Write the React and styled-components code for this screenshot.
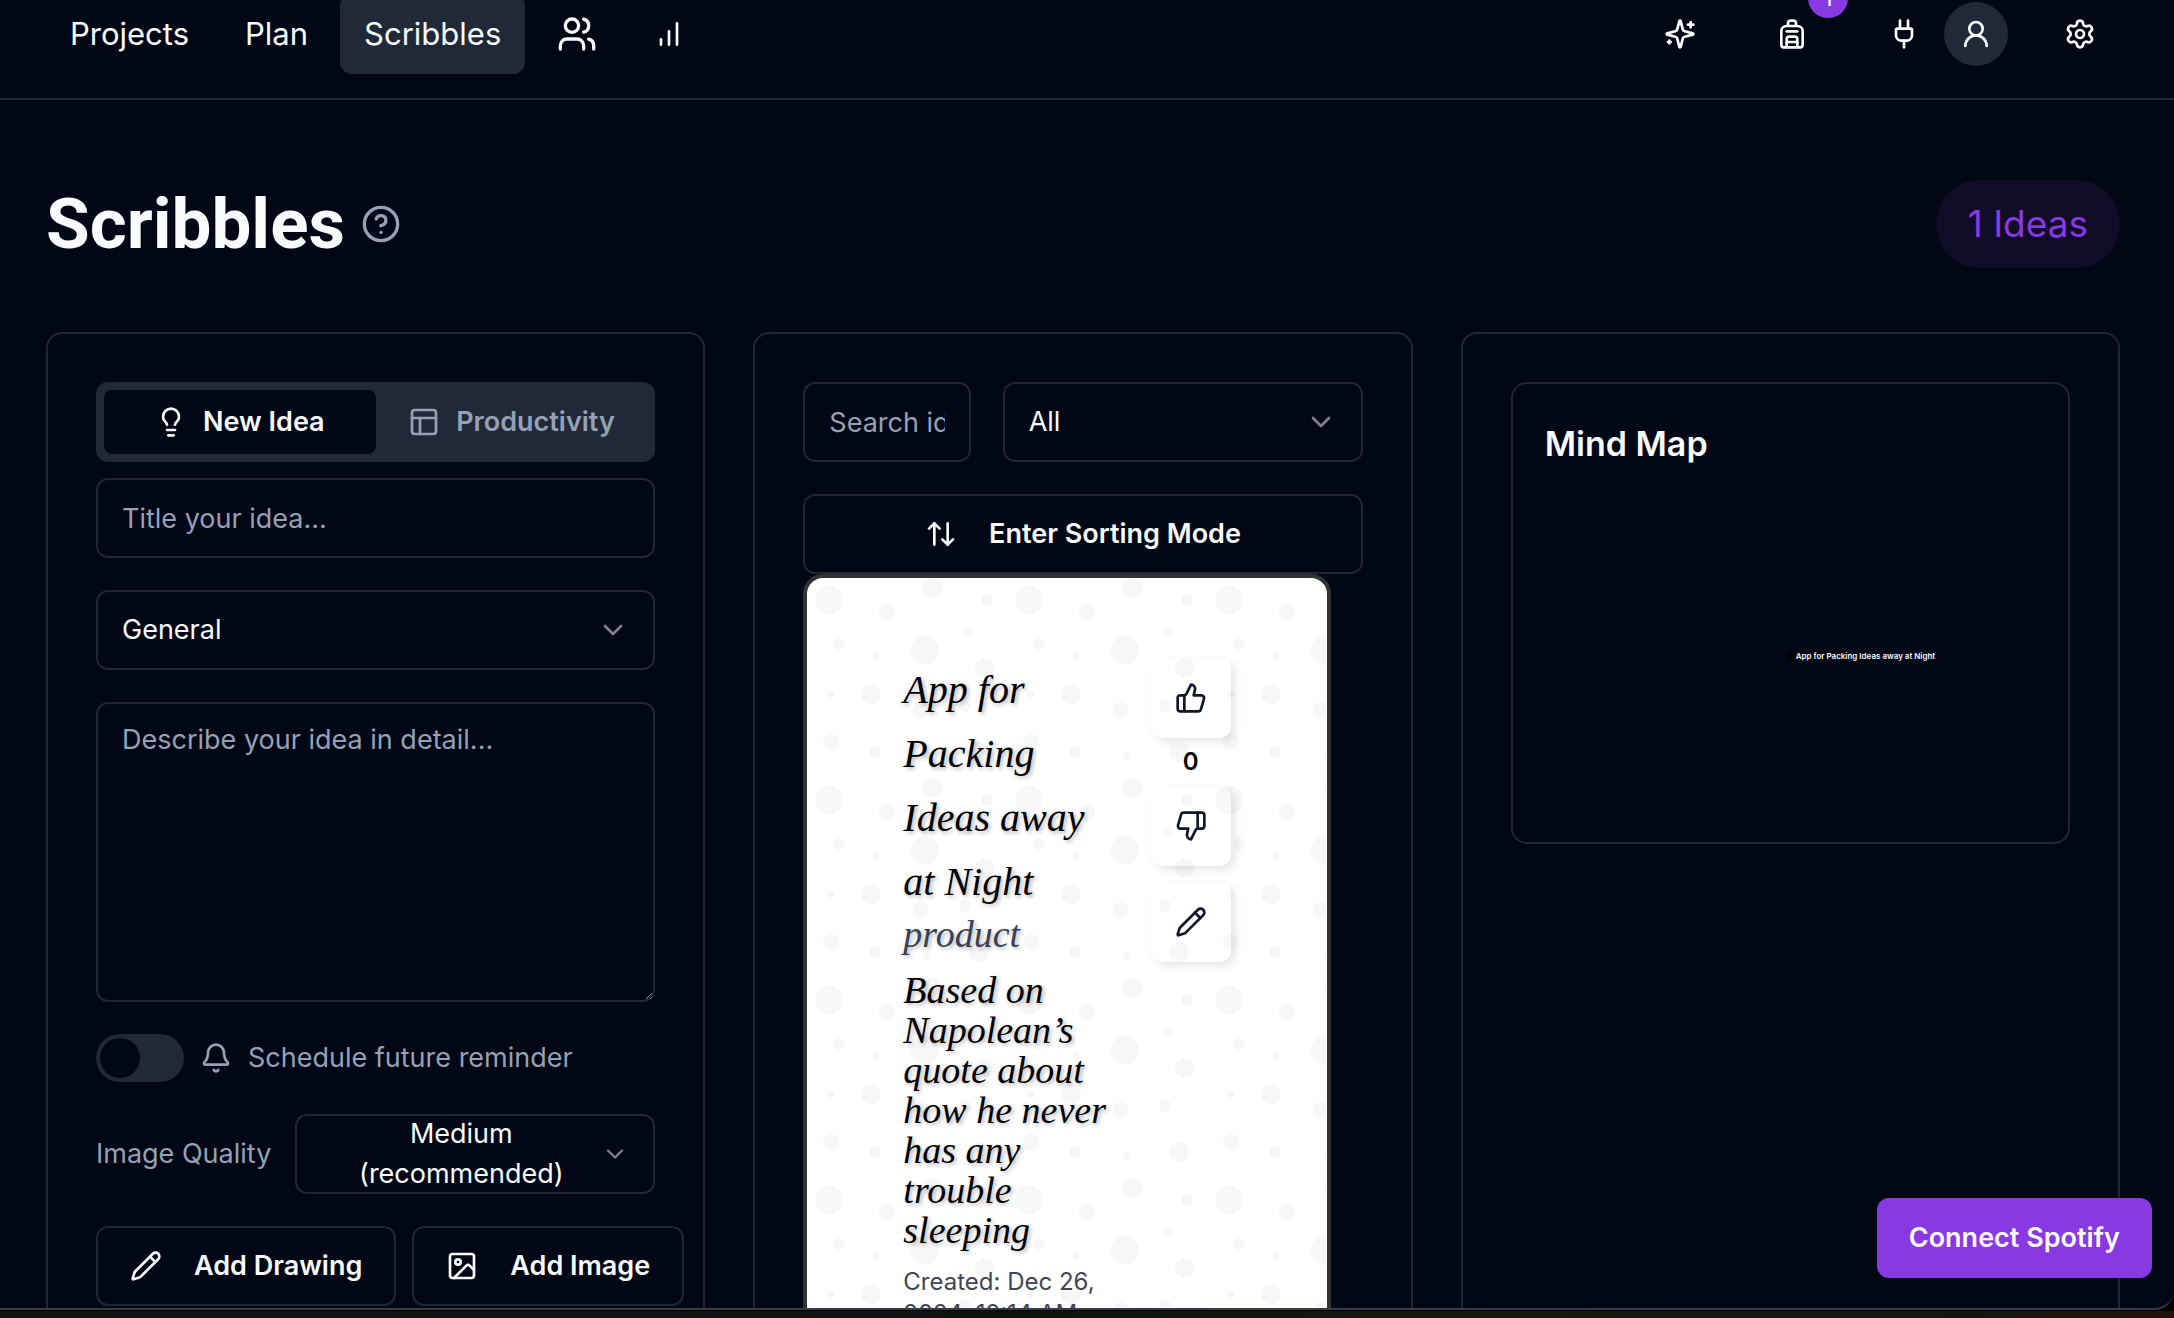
import styled, { createGlobalStyle, css } from 'styled-components';
import {
    ArrowUpDown, Backpack, Bell, ChevronDown, CircleHelp, Image, Lightbulb,
    PanelsTopLeft, Pencil, Plug, Settings, ThumbsDown, ThumbsUp, UserRound, Users,
} from 'lucide-react';

// [cx, cy, r] of every bubble in one 100 x 100 tile
const bubbles = [
    [11, 11, 7], [59, 36, 7], [16, 33, 3], [79, 64, 3], [34, 87, 3], [90, 11, 3],
    [12, 82, 4], [40, 17, 4], [63, 5, 5], [57, 66, 4], [86, 87, 5], [32, 58, 5],
    [89, 45, 5], [80, 27, 2], [60, 89, 2], [35, 39, 2], [12, 58, 2],
];

const BarsIcon = () => (
    <svg width="32" height="32" viewBox="0 0 24 24" fill="none" stroke="currentColor" strokeWidth="2" strokeLinecap="round" aria-hidden="true">
        <path d="M12 20V10" />
        <path d="M18 20V4" />
        <path d="M6 20v-4" />
    </svg>
)

const SparklesIcon = () => (
    <svg width="32" height="32" viewBox="0 0 24 24" fill="none" stroke="currentColor" strokeWidth="2" strokeLinecap="round" strokeLinejoin="round" aria-hidden="true">
        <path d="M9.937 15.5A2 2 0 0 0 8.5 14.063l-6.135-1.582a.5.5 0 0 1 0-.962L8.5 9.936A2 2 0 0 0 9.937 8.5l1.582-6.135a.5.5 0 0 1 .963 0L14.063 8.5A2 2 0 0 0 15.5 9.937l6.135 1.581a.5.5 0 0 1 0 .964L15.5 14.063a2 2 0 0 0-1.437 1.437l-1.582 6.135a.5.5 0 0 1-.963 0z" />
        <path d="M20 3v4" />
        <path d="M22 5h-4" />
        <path d="M4 17v2" />
        <path d="M5 18H3" />
    </svg>
)

const Bubbles = () => (
    <BubbleLayer aria-hidden="true">
        <defs>
            <pattern id="bubbles" width="200" height="200" patternUnits="userSpaceOnUse">
                {bubbles.map(([x, y, r]) => (
                    <circle key={`${x}-${y}`} cx={x * 2} cy={y * 2} r={r * 2} fill="#f7f7f7" />
                ))}
            </pattern>
        </defs>
        <rect width="100%" height="100%" fill="url(#bubbles)" />
    </BubbleLayer>
)

const TopNav = () => (
    <Header>
        <Nav>
            <NavLink href="#projects">Projects</NavLink>
            <NavLink href="#plan">Plan</NavLink>
            <NavLink href="#scribbles" $active>Scribbles</NavLink>
            <NavLink href="#team" aria-label="Team"><Users size={40} /></NavLink>
            <NavLink href="#stats" aria-label="Stats"><BarsIcon /></NavLink>
        </Nav>
        <Actions>
            <IconButton aria-label="Assistant"><SparklesIcon /></IconButton>
            <IconButton aria-label="Backpack">
                <Backpack size={32} />
                <Badge>1</Badge>
            </IconButton>
            <Account>
                <IconButton aria-label="Integrations"><Plug size={32} /></IconButton>
                <Avatar aria-label="Profile"><UserRound size={32} /></Avatar>
            </Account>
            <IconButton aria-label="Settings"><Settings size={32} /></IconButton>
        </Actions>
    </Header>
)

const IdeaForm = () => (
    <Card>
        <TabList role="tablist">
            <Tab role="tab" aria-selected="true" $active><Lightbulb size={32} />New Idea</Tab>
            <Tab role="tab" aria-selected="false"><PanelsTopLeft size={32} />Productivity</Tab>
        </TabList>
        <Form>
            <Input aria-label="Title" placeholder="Title your idea..." />
            <SelectBox>
                <Select aria-label="Category" defaultValue="General">
                    <option>General</option>
                </Select>
                <ChevronDown size={32} />
            </SelectBox>
            <TextArea aria-label="Description" placeholder="Describe your idea in detail..." />
            <Row $gap={16}>
                <Switch type="checkbox" id="reminder" />
                <ReminderLabel htmlFor="reminder"><Bell size={32} />Schedule future reminder</ReminderLabel>
            </Row>
            <Row $gap={24}>
                <Label htmlFor="quality">Image Quality</Label>
                <QualityBox>
                    <QualityValue aria-hidden="true">Medium (recommended)</QualityValue>
                    <ChevronDown size={28} />
                    <QualitySelect id="quality" defaultValue="medium">
                        <option value="medium">Medium</option>
                    </QualitySelect>
                </QualityBox>
            </Row>
            <Row $gap={16}>
                <OutlineButton type="button"><Pencil size={32} />Add Drawing</OutlineButton>
                <OutlineButton type="button"><Image size={32} />Add Image</OutlineButton>
            </Row>
        </Form>
    </Card>
)

const IdeaList = () => (
    <Card>
        <Filters>
            <Input aria-label="Search ideas" placeholder="Search ideas..." />
            <SelectBox $width="360px">
                <Select aria-label="Filter" defaultValue="All">
                    <option>All</option>
                </Select>
                <ChevronDown size={32} />
            </SelectBox>
        </Filters>
        <OutlineButton type="button" $wide><ArrowUpDown size={32} />Enter Sorting Mode</OutlineButton>
        <Note>
            <Bubbles />
            <NoteText>
                <NoteTitle>App for Packing Ideas away at Night</NoteTitle>
                <NoteTag>product</NoteTag>
                <NoteBody>Based on Napolean’s quote about how he never has any trouble sleeping</NoteBody>
                <NoteDate>Created: Dec 26, 2024, 12:14 AM</NoteDate>
            </NoteText>
            <NoteActions>
                <NoteButton aria-label="Like"><ThumbsUp size={32} /></NoteButton>
                <Votes>0</Votes>
                <NoteButton aria-label="Dislike"><ThumbsDown size={32} /></NoteButton>
                <NoteButton aria-label="Edit" $spaced><Pencil size={32} /></NoteButton>
            </NoteActions>
        </Note>
    </Card>
)

const MindMap = () => (
    <Card>
        <MapPanel>
            <MapTitle>Mind Map</MapTitle>
            <MapCanvas>
                <circle cx="50%" cy="50%" r="4" fill="#000000" />
                <text x="50%" y="50%" dx="5" dy="2">App for Packing Ideas away at Night</text>
            </MapCanvas>
        </MapPanel>
    </Card>
)

const App = () => {
    return (
    <>
    <GlobalStyle />
    <Screen>
        <Window>
            <TopNav />
            <Main>
                <TitleBar>
                    <Title>Scribbles <CircleHelp size={40} /></Title>
                    <Count>1 Ideas</Count>
                </TitleBar>
                <Columns>
                    <IdeaForm />
                    <IdeaList />
                    <MindMap />
                </Columns>
            </Main>
            <SpotifyButton>Connect Spotify</SpotifyButton>
        </Window>
        <Desktop />
    </Screen>
    </>
    )
}

export default App

const GlobalStyle = createGlobalStyle`
    * {
        box-sizing : border-box ;
    }
    body {
        margin : 0 ;
        background : #000000 ;
        color : #f8fafc ;
        font-family : Inter, sans-serif ;
        font-size : 27px ;
        line-height : 40px ;
    }
    button, input, textarea, select {
        font : inherit ;
        color : inherit ;
    }
    svg {
        flex-shrink : 0 ;
    }
`
const Screen = styled.div`
    height : 100vh ;
    display : flex ;
    flex-direction : column ;
`
const Window = styled.div`
    position : relative ;
    flex : 1 ;
    min-height : 0 ;
    overflow : hidden ;
    background : #010715 ;
    border-bottom : 2px solid #363b47 ;
    border-bottom-right-radius : 20px ;
`
const Desktop = styled.div`
    height : 8px ;
    border-top : 1px solid #000000 ;
    background : linear-gradient(90deg, #111111 43%, #0b120a 44%, #17170f 70%, #12140f 90%, #22120b) ;
`

// header
const Header = styled.header`
    display : flex ;
    justify-content : space-between ;
    align-items : center ;
    margin-top : -6px ;
    padding : 0 54px 24px 46px ;
    border-bottom : 2px solid #1f2736 ;
`
const Nav = styled.nav`
    display : flex ;
    gap : 8px ;
`
const NavLink = styled.a`
    display : flex ;
    align-items : center ;
    height : 80px ;
    padding : 0 24px ;
    border-radius : 12px ;
    background : ${({ $active }) => ($active ? '#202938' : 'transparent')} ;
    color : #f8fafc ;
    font-size : 31px ;
    text-decoration : none ;
`
const Actions = styled.div`
    display : flex ;
    align-items : center ;
    gap : 32px ;
`
const Account = styled.div`
    display : flex ;
    align-items : center ;
`
const IconButton = styled.button`
    position : relative ;
    display : flex ;
    justify-content : center ;
    align-items : center ;
    width : 80px ;
    height : 80px ;
    padding : 0 ;
    border : none ;
    border-radius : 12px ;
    background : transparent ;
    cursor : pointer ;
`
const Avatar = styled(IconButton)`
    width : 64px ;
    height : 64px ;
    border-radius : 50% ;
    background : #202938 ;
`
const Badge = styled.span`
    position : absolute ;
    top : -16px ;
    right : -16px ;
    width : 40px ;
    height : 40px ;
    border-radius : 50% ;
    background : #8839e1 ;
    font-size : 24px ;
`

// page title
const Main = styled.main`
    padding : 80px 54px 0 46px ;
`
const TitleBar = styled.div`
    display : flex ;
    justify-content : space-between ;
    align-items : center ;
    margin-bottom : 64px ;
`
const Title = styled.h1`
    display : flex ;
    align-items : center ;
    gap : 16px ;
    margin : 0 ;
    font-family : Roboto, sans-serif ;
    font-size : 71px ;
    font-weight : 700 ;
    line-height : 80px ;

    svg {
        color : #96a1b5 ;
    }
`
const Count = styled.span`
    padding : 16px 32px ;
    border-radius : 44px ;
    background : #110c28 ;
    color : #8839e1 ;
    font-size : 37px ;
    line-height : 56px ;
`

// columns
const Columns = styled.div`
    display : grid ;
    grid-template-columns : repeat(3, minmax(0, 1fr)) ;
    gap : 48px ;
`
const Card = styled.section`
    padding : 48px ;
    border : 2px solid #1f2736 ;
    border-radius : 16px ;
`
const TabList = styled.div`
    display : grid ;
    grid-template-columns : 1fr 1fr ;
    height : 80px ;
    margin-bottom : 16px ;
    padding : 8px ;
    border-radius : 12px ;
    background : #202938 ;
`
const Tab = styled.button`
    display : flex ;
    justify-content : center ;
    align-items : center ;
    gap : 16px ;
    padding : 0 ;
    border : none ;
    border-radius : 8px ;
    background : ${({ $active }) => ($active ? '#010715' : 'transparent')} ;
    color : ${({ $active }) => ($active ? '#f8fafc' : '#96a1b5')} ;
    font-weight : 600 ;
`
const Form = styled.form`
    display : flex ;
    flex-direction : column ;
    gap : 32px ;
`
const field = css`
    width : 100% ;
    min-width : 0 ;
    height : 80px ;
    padding : 0 24px ;
    border : 2px solid #1f2736 ;
    border-radius : 12px ;
    background : #010715 ;
    outline : none ;

    &::placeholder {
        color : #96a1b5 ;
        opacity : 1 ;
    }
`
const Input = styled.input`
    ${field}
`
const TextArea = styled.textarea`
    ${field}
    display : block ;
    height : 300px ;
    padding : 16px 24px ;
    resize : vertical ;
`
const SelectBox = styled.div`
    position : relative ;
    flex : none ;
    width : ${({ $width }) => $width || '100%'} ;

    svg {
        position : absolute ;
        top : 24px ;
        right : 26px ;
        opacity : 0.5 ;
        pointer-events : none ;
    }
`
const Select = styled.select`
    ${field}
    appearance : none ;
`
const Row = styled.div`
    display : flex ;
    align-items : center ;
    gap : ${({ $gap }) => $gap}px ;
`
const Switch = styled.input`
    appearance : none ;
    display : flex ;
    width : 88px ;
    height : 48px ;
    margin : 0 ;
    padding : 4px ;
    border-radius : 24px ;
    background : #202938 ;

    &::before {
        content : '' ;
        width : 40px ;
        height : 40px ;
        border-radius : 50% ;
        background : #010715 ;
    }
`
const Label = styled.label`
    flex : none ;
    color : #96a1b5 ;
`
const ReminderLabel = styled(Label)`
    display : flex ;
    align-items : center ;
    gap : 16px ;
`
const QualityBox = styled.div`
    ${field}
    position : relative ;
    flex : 1 ;
    display : flex ;
    align-items : center ;

    svg {
        opacity : 0.5 ;
    }
`
const QualityValue = styled.span`
    flex : 1 ;
    text-align : center ;
`
const QualitySelect = styled.select`
    position : absolute ;
    inset : 0 ;
    width : 100% ;
    opacity : 0 ;
`
const OutlineButton = styled.button`
    display : flex ;
    justify-content : center ;
    align-items : center ;
    flex : none ;
    gap : 32px ;
    width : ${({ $wide }) => ($wide ? '100%' : 'auto')} ;
    height : 80px ;
    padding : 0 32px ;
    border : 2px solid #1f2736 ;
    border-radius : 12px ;
    background : #010715 ;
    font-weight : 600 ;
    white-space : nowrap ;
    cursor : pointer ;
`
const Filters = styled.div`
    display : flex ;
    gap : 32px ;
    margin-bottom : 32px ;
`

// note
const Note = styled.article`
    position : relative ;
    display : flex ;
    align-items : flex-start ;
    gap : 32px ;
    margin-right : 32px ;
    padding : 80px 96px ;
    border : 4px solid #333333 ;
    border-radius : 20px ;
    background : #ffffff ;
    color : #000000 ;
    overflow : hidden ;
`
const BubbleLayer = styled.svg`
    position : absolute ;
    inset : 0 ;
    width : 100% ;
    height : 100% ;
`
const NoteText = styled.div`
    position : relative ;
    flex : 1 ;
    min-width : 0 ;
`
const script = css`
    margin : 0 ;
    font-family : 'Apple Chancery', 'Liberation Serif', serif ;
    font-style : italic ;
    font-weight : 400 ;
    text-shadow : 2px 2px 4px rgba(0,0,0,0.3) ;
`
const NoteTitle = styled.h2`
    ${script}
    font-size : 40px ;
    line-height : 64px ;
`
const NoteTag = styled.p`
    ${script}
    color : #384252 ;
    font-size : 38px ;
`
const NoteBody = styled.p`
    ${script}
    margin : 16px 0 ;
    font-size : 38px ;
`
const NoteDate = styled.p`
    margin : 0 ;
    color : #3f4656 ;
    font-size : 24px ;
    line-height : 32px ;
`
const NoteActions = styled.div`
    position : relative ;
    display : flex ;
    flex-direction : column ;
    align-items : center ;
`
const NoteButton = styled.button`
    display : flex ;
    justify-content : center ;
    align-items : center ;
    width : 80px ;
    height : 80px ;
    margin-top : ${({ $spaced }) => ($spaced ? '16px' : '0')} ;
    padding : 0 ;
    border : none ;
    border-radius : 12px ;
    background : transparent ;
    box-shadow : 4px 4px 10px rgba(0,0,0,0.1) ;
    color : #0f172a ;
    cursor : pointer ;
`
const Votes = styled.span`
    margin : 8px 0 ;
    font-size : 24px ;
    font-weight : 600 ;
    line-height : 32px ;
`

// mind map
const MapPanel = styled.div`
    display : flex ;
    flex-direction : column ;
    gap : 32px ;
    padding : 32px ;
    border : 2px solid #1f2736 ;
    border-radius : 16px ;
`
const MapTitle = styled.h2`
    margin : 0 ;
    font-size : 34px ;
    font-weight : 600 ;
    line-height : 56px ;
`
const MapCanvas = styled.svg`
    width : 100% ;
    height : 306px ;
    fill : #f8fafc ;
    font-size : 8px ;
    font-weight : 600 ;
`
const SpotifyButton = styled.button`
    position : absolute ;
    right : 22px ;
    bottom : 30px ;
    height : 80px ;
    padding : 0 32px ;
    border : none ;
    border-radius : 12px ;
    background : #8839e1 ;
    font-weight : 600 ;
    cursor : pointer ;
`
